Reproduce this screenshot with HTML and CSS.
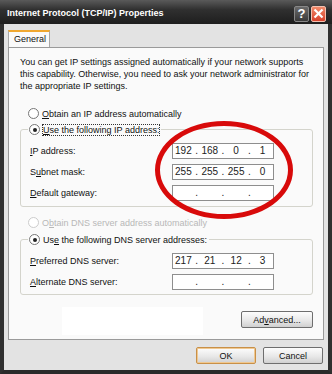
FILE: index.html
```html
<!DOCTYPE html>
<html lang="en">
<head>
    <meta charset="UTF-8">
    <title>Internet Protocol (TCP/IP) Properties</title>
    <link rel="stylesheet" href="styles.css">
</head>
<body>
    <div class="window">
        <div class="titlebar">
            <span class="title">Internet Protocol (TCP/IP) Properties</span>
            <span class="tbtn help">?</span>
            <span class="tbtn close">
                <svg width="11" height="11" viewBox="0 0 11 11"><path d="M1.5 1.5 L9.5 9.5 M9.5 1.5 L1.5 9.5" stroke="#fff" stroke-width="2.2"/></svg>
            </span>
        </div>
        <div class="client">
            <div class="tabs"><span class="tab">General</span></div>
            <div class="panel">
                <p class="intro">You can get IP settings assigned automatically if your network supports<br>this capability. Otherwise, you need to ask your network administrator for<br>the appropriate IP settings.</p>

                <div class="radio-row first"><span class="radio"></span><span><u>O</u>btain an IP address automatically</span></div>
                <div class="group">
                    <div class="legend"><span class="radio checked"></span><span class="focus"><u>U</u>se the following IP address:</span></div>
                    <div class="field"><span class="label"><u>I</u>P address:</span><span class="ipbox"><i>192</i>.<i>168</i>.<i>0</i>.<i>1</i></span></div>
                    <div class="field"><span class="label">S<u>u</u>bnet mask:</span><span class="ipbox"><i>255</i>.<i>255</i>.<i>255</i>.<i>0</i></span></div>
                    <div class="field"><span class="label"><u>D</u>efault gateway:</span><span class="ipbox"><i></i>.<i></i>.<i></i>.<i></i></span></div>
                </div>

                <div class="radio-row disabled"><span class="radio"></span><span>O<u>b</u>tain DNS server address automatically</span></div>
                <div class="group dns">
                    <div class="legend"><span class="radio checked"></span><span>Us<u>e</u> the following DNS server addresses:</span></div>
                    <div class="field"><span class="label"><u>P</u>referred DNS server:</span><span class="ipbox"><i>217</i>.<i>21</i>.<i>12</i>.<i>3</i></span></div>
                    <div class="field"><span class="label"><u>A</u>lternate DNS server:</span><span class="ipbox"><i></i>.<i></i>.<i></i>.<i></i></span></div>
                </div>

                <div class="adv-row">
                    <span class="blank"></span>
                    <button class="btn">Ad<u>v</u>anced...</button>
                </div>
                <div class="circle"></div>
            </div>
            <div class="footer">
                <button class="btn ok">OK</button>
                <button class="btn">Cancel</button>
            </div>
        </div>
    </div>
</body>
</html>
```

FILE: styles.css
```css
body {
    margin: 0;
    width: 332px;
    height: 374px;
    overflow: hidden;
    font-family: "Liberation Sans", Arial, sans-serif;
    font-size: 9px;
    color: #111;
    background: #2c2c2c;
}

.window {
    height: 374px;
    box-sizing: border-box;
    border-left: 4px solid #303030;
    border-right: 4px solid #303030;
    border-bottom: 4px solid #2a2a2a;
    display: flex;
    flex-direction: column;
}

.titlebar {
    height: 24px;
    margin: 0 -4px;
    padding: 0 6px 0 7px;
    display: flex;
    align-items: center;
    background: linear-gradient(#5a5a5a, #303030 40%, #1e1e1e);
}

.title {
    flex: 1;
    color: #fff;
    font-family: "Liberation Sans", Arial, sans-serif;
    font-weight: bold;
    font-size: 9px;
    padding-top: 2px;
}

.tbtn {
    width: 15px;
    height: 16px;
    margin-left: 2px;
    margin-top: 3px;
    border-radius: 2px;
    display: flex;
    align-items: center;
    justify-content: center;
    box-sizing: border-box;
}

.help {
    background: linear-gradient(#6a6a6a, #3a3a3a);
    border: 1px solid #888;
    color: #fff;
    font-weight: bold;
    font-size: 13px;
}

.close {
    background: linear-gradient(#f08a6a, #d8402a);
    border: 1px solid #f2c0b0;
}

.client {
    flex: 1;
    background: #e3e3e3;
    padding: 6px 4px 0 4px;
    display: flex;
    flex-direction: column;
}

.tabs {
    height: 17px;
    display: flex;
}

.tab {
    width: 42px;
    height: 17px;
    box-sizing: border-box;
    background: #fafafa;
    border: 1px solid #a8a8a8;
    border-top: 2px solid #f0a830;
    border-bottom: none;
    padding: 2px 0 0 5px;
    position: relative;
    z-index: 1;
}

.panel {
    height: 293px;
    box-sizing: border-box;
    background: #fafafa;
    border: 1px solid #9a9a9a;
    padding: 8px 10px 0 11px;
    position: relative;
}

.intro {
    margin: 0;
    line-height: 12px;
    white-space: nowrap;
}

.radio-row, .legend {
    display: flex;
    align-items: center;
    height: 13px;
}

.radio-row.first {
    margin-top: 15px;
    padding-left: 8px;
}

.radio {
    width: 9px;
    height: 9px;
    border: 1px solid #777;
    border-radius: 50%;
    background: #fff;
    margin-right: 3px;
    position: relative;
}

.radio.checked::after {
    content: "";
    position: absolute;
    left: 2.5px;
    top: 2.5px;
    width: 4px;
    height: 4px;
    border-radius: 50%;
    background: #222;
}

.focus {
    outline: 1px dotted #333;
}

.group {
    margin-top: 9px;
    border: 1px solid #d4d4cc;
    border-radius: 3px;
    box-sizing: border-box;
    height: 78px;
}

.legend {
    margin: -7px 0 0 7px;
    padding: 0 2px 0 1px;
    background: #fafafa;
    width: fit-content;
}

.field {
    display: flex;
    align-items: center;
    height: 21px;
    padding-left: 9px;
}

.legend + .field {
    margin-top: 4px;
}

.label {
    width: 142px;
}

.ipbox {
    width: 102px;
    height: 16px;
    box-sizing: border-box;
    border: 1px solid #8e8e8e;
    background: #fff;
    display: flex;
    align-items: center;
    justify-content: space-around;
    font-size: 10px;
    color: #222;
}

.ipbox i {
    font-style: normal;
    width: 18px;
    text-align: center;
}

.radio-row.disabled {
    color: #b8b8b8;
    margin-top: 9px;
    padding-left: 8px;
}

.radio-row.disabled .radio {
    border-color: #ccc;
}

.group.dns {
    margin-top: 10px;
    height: 56px;
}

.adv-row {
    display: flex;
    justify-content: space-between;
    align-items: flex-start;
    margin-top: 16px;
}

.blank {
    width: 141px;
    height: 28px;
    background: #fff;
    margin: -4px 0 0 42px;
}

.btn {
    font-family: "Liberation Sans", Arial, sans-serif;
    font-size: 9px;
    color: #111;
    height: 17px;
    padding: 0;
    border: 1px solid #6e6e6e;
    border-radius: 2px;
    background: linear-gradient(#fdfdfd, #e6e6e6 60%, #d0d0d0);
}

.adv-row .btn {
    width: 72px;
}

.footer {
    display: flex;
    justify-content: flex-end;
    gap: 7px;
    padding: 7px 1px 0 0;
}

.footer .btn {
    width: 60px;
}

.btn.ok {
    border-color: #c89048;
    box-shadow: inset 0 0 0 1px #f0c890;
}

.circle {
    position: absolute;
    left: 146px;
    top: 73px;
    width: 128px;
    height: 88px;
    border: 5px solid #d80a0a;
    border-radius: 50%;
}
```
